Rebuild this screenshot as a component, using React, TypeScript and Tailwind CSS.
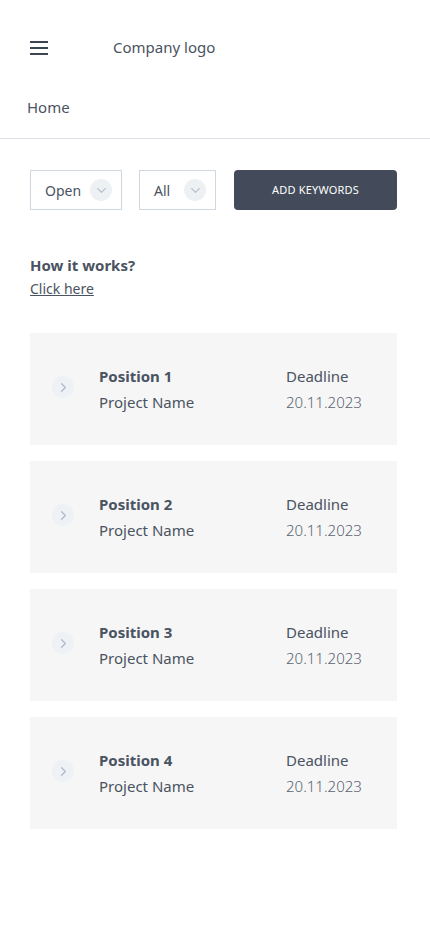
import { ChevronDown, ChevronRight } from 'lucide-react'

type Position = {
  id: number
  title: string
  project: string
  deadline: string
}

const positions: Position[] = [
  { id: 1, title: 'Position 1', project: 'Project Name', deadline: '20.11.2023' },
  { id: 2, title: 'Position 2', project: 'Project Name', deadline: '20.11.2023' },
  { id: 3, title: 'Position 3', project: 'Project Name', deadline: '20.11.2023' },
  { id: 4, title: 'Position 4', project: 'Project Name', deadline: '20.11.2023' }
]

function Select({ label, width }: { label: string; width: string }) {
  return (
    <div className={`flex items-center justify-between h-[40px] border border-[#cfd8e0] bg-white pl-[14px] pr-[9px] ${width}`}>
      <span className="text-[14px] text-[#4a5361]">{label}</span>
      <span className="flex items-center justify-center w-[22px] h-[22px] rounded-full bg-[#eef1f4]">
        <ChevronDown size={15} strokeWidth={2} className="text-[#b4bfcb]" />
      </span>
    </div>
  )
}

export default function App() {
  return (
    <div className="min-h-[926px] w-[430px] bg-white font-['Noto_Sans',sans-serif] text-[#4a5361]">
      <header className="flex items-center h-[97px] pl-[30px] pb-[2px]">
        <div className="flex flex-col gap-[4px] w-[18px]">
          <span className="block h-[2px] bg-[#3d4553]" />
          <span className="block h-[2px] bg-[#3d4553]" />
          <span className="block h-[2px] bg-[#3d4553]" />
        </div>
        <span className="ml-[65px] text-[15px] text-[#4a5361]">Company logo</span>
      </header>
      <nav className="h-[44px] pl-[27px] -mt-[2px] border-b border-[#dde3e8]">
        <span className="text-[15px] text-[#4a5361]">Home</span>
      </nav>

      <main className="pl-[30px] pr-[33px]">
        <div className="flex items-center mt-[31px]">
          <Select label="Open" width="w-[92px]" />
          <div className="ml-[17px]">
            <Select label="All" width="w-[77px]" />
          </div>
          <button className="ml-[18px] flex-1 h-[40px] rounded-[4px] bg-[#434b5a] text-white text-[11px] tracking-[0.2px]">
            ADD KEYWORDS
          </button>
        </div>

        <div className="mt-[44px]">
          <h2 className="text-[15px] font-bold leading-[22px]">How it works?</h2>
          <a className="text-[14px] underline leading-[22px] mt-[2px] block">Click here</a>
        </div>

        <div className="mt-[33px] flex flex-col gap-[16px]">
          {positions.map(p => (
            <div key={p.id} className="flex items-center h-[112px] bg-[#f6f6f6] pl-[22px]">
              <span className="flex items-center justify-center w-[22px] h-[22px] -mt-[4px] rounded-full bg-[#eef1f5]">
                <ChevronRight size={15} strokeWidth={2} className="text-[#b0bbc7]" />
              </span>
              <div className="ml-[25px] w-[187px]">
                <div className="text-[15px] font-bold leading-[26px]">{p.title}</div>
                <div className="text-[15px] leading-[26px]">{p.project}</div>
              </div>
              <div>
                <div className="text-[15px] leading-[26px]">Deadline</div>
                <div className="text-[15px] font-light leading-[26px] text-[#5b6470]">{p.deadline}</div>
              </div>
            </div>
          ))}
        </div>
      </main>
    </div>
  )
}
